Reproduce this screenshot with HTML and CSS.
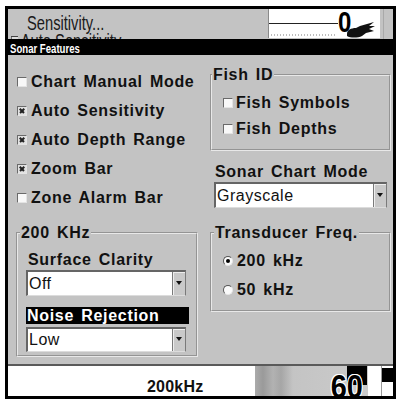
FILE: index.html
```html
<!DOCTYPE html>
<html lang="en">
<head>
<meta charset="utf-8">
<title>Sonar Features</title>
<link rel="stylesheet" href="styles.css">
</head>
<body>
<div class="screen">
  <div class="top">
    <div class="top-left">
      <div class="sens">Sensitivity...</div>
      <div class="sens sens-auto"><span class="mini-cb"></span>Auto Sensitivity</div>
    </div>
    <div class="depth-box">
      <span class="scale-line"></span>
      <span class="zero">0</span>
      <svg class="fish" viewBox="0 0 28 16" width="28" height="16" aria-hidden="true">
        <path d="M0 12 C0 8 4 6 9 6 L13 4 L27 0 L22 4 L28 4 L22 7 L27 9 L19 11 L15 14 C11 16 3 16 0 14 Z" fill="#111"/>
      </svg>
    </div>
    <div class="top-gutter"></div>
  </div>

  <div class="titlebar"><span class="titlebar-text">Sonar Features</span></div>

  <div class="dialog">
    <div class="col col-left">
      <div class="check"><span class="cb"></span>Chart Manual Mode</div>
      <div class="check"><span class="cb on"></span>Auto Sensitivity</div>
      <div class="check"><span class="cb on"></span>Auto Depth Range</div>
      <div class="check"><span class="cb on"></span>Zoom Bar</div>
      <div class="check"><span class="cb"></span>Zone Alarm Bar</div>

      <div class="group group-200">
        <div class="group-title">200 KHz</div>
        <div class="field-label clarity">Surface Clarity</div>
        <div class="select select-off"><span class="select-value">Off</span><span class="select-btn"></span></div>
        <div class="field-label focused">Noise Rejection</div>
        <div class="select select-low"><span class="select-value">Low</span><span class="select-btn"></span></div>
      </div>
    </div>

    <div class="col col-right">
      <div class="group group-fish">
        <div class="group-title">Fish ID</div>
        <div class="check check-sub first"><span class="cb"></span>Fish Symbols</div>
        <div class="check check-sub"><span class="cb"></span>Fish Depths</div>
      </div>

      <div class="field-label chart-mode">Sonar Chart Mode</div>
      <div class="select select-wide"><span class="select-value">Grayscale</span><span class="select-btn"></span></div>

      <div class="group group-freq">
        <div class="group-title">Transducer Freq.</div>
        <div class="radio-row first"><span class="radio on"></span>200 kHz</div>
        <div class="radio-row"><span class="radio"></span>50 kHz</div>
      </div>
    </div>
  </div>

  <div class="status">
    <div class="status-freq">200kHz</div>
    <div class="status-depth"><span class="depth-num">60</span></div>
    <div class="status-gap"></div>
    <div class="status-scale"><span class="scale-mark"></span></div>
  </div>
</div>
</body>
</html>
```

FILE: styles.css
```css
html, body {
  margin: 0;
  padding: 0;
  background: #fff;
}

body {
  font-family: "Liberation Sans", Arial, sans-serif;
  color: #111;
}

.screen {
  width: 391px;
  height: 393px;
  margin: 6px 0 0 5px;
  border: 3px solid #000;
  box-sizing: border-box;
  background: #c3c3c3;
  display: flex;
  flex-direction: column;
  overflow: hidden;
}

/* ---------- top strip (underlying menu) ---------- */
.top {
  height: 30px;
  flex: none;
  display: flex;
  overflow: hidden;
}

.top-left {
  width: 260px;
  flex: none;
  overflow: hidden;
}

.sens {
  font-size: 21px;
  line-height: 20px;
  margin: 4px 0 0 19px;
  white-space: nowrap;
  color: #1a1a1a;
  transform: scaleX(0.7);
  transform-origin: 0 0;
}

.sens-auto {
  margin: -2px 0 0 3px;
  display: flex;
  align-items: center;
}

.mini-cb {
  width: 9px;
  height: 9px;
  border-top: 1px solid #444;
  border-left: 1px solid #444;
  background: #ddd;
  margin: 0 4px 0 0;
  flex: none;
}

.depth-box {
  width: 112px;
  height: 29px;
  flex: none;
  border-left: 1px solid #8a8a8a;
  box-sizing: border-box;
  display: flex;
  align-items: flex-start;
  background:
    repeating-linear-gradient(90deg, #bdbdbd 0 1px, transparent 1px 3px) no-repeat 2px 25px / 66px 2px,
    #fff;
}

.scale-line {
  width: 69px;
  height: 1px;
  margin-top: 14px;
  background: #222;
  flex: none;
}

.zero {
  display: inline-block;
  font-weight: bold;
  font-size: 30px;
  line-height: 25px;
  color: #000;
  transform: scaleX(0.8);
  transform-origin: 0 0;
}

.fish {
  flex: none;
  margin: 13px 0 0 -8px;
}

.top-gutter {
  flex: 1;
  margin-left: 3px;
  border-left: 1px solid #a9a9a9;
}

/* ---------- title bar ---------- */
.titlebar {
  height: 16px;
  flex: none;
  background: #000;
  padding-left: 2px;
}

.titlebar-text {
  display: inline-block;
  color: #fff;
  font-weight: bold;
  font-size: 12px;
  line-height: 16px;
  white-space: nowrap;
  transform: scaleX(0.8);
  transform-origin: 0 0;
}

/* ---------- dialog ---------- */
.dialog {
  height: 309px;
  flex: none;
  display: flex;
  border-bottom: 2px solid #5a5a5a;
}

.col-left {
  width: 197px;
  flex: none;
  padding: 12px 0 0 9px;
  box-sizing: border-box;
}

.col-right {
  flex: 1;
}

.check,
.radio-row,
.field-label,
.group-title {
  font-weight: bold;
  font-size: 16px;
  letter-spacing: 0.7px;
  word-spacing: 2px;
  white-space: nowrap;
  color: #111;
}

.check {
  height: 29px;
  display: flex;
  align-items: center;
}

.cb {
  width: 10px;
  height: 10px;
  box-sizing: border-box;
  border: 1px solid;
  border-color: #6a6a6a #e4e4e4 #e4e4e4 #6a6a6a;
  background: #f8f8f8;
  margin-right: 4px;
  flex: none;
  position: relative;
}

.cb.on {
  background: #e2e2e2;
}

.cb.on::before,
.cb.on::after {
  content: "";
  position: absolute;
  left: 1px;
  top: 3px;
  width: 6px;
  height: 1.6px;
  background: #222;
  transform: rotate(45deg);
}

.cb.on::after {
  transform: rotate(-45deg);
}

/* group boxes */
.group {
  border: 2px groove #e8e8e8;
  box-sizing: border-box;
}

.group-title {
  display: table;
  line-height: 18px;
  margin-top: -10px;
  padding: 0 1px;
  background: #c3c3c3;
}

.group-200 {
  width: 182px;
  margin: 20px 0 0 -1px;
  padding-bottom: 3px;
}

.group-200 .group-title {
  margin-left: 2px;
}

.clarity {
  line-height: 18px;
  margin: 9px 0 0 10px;
}

.field-label.focused {
  width: 163px;
  height: 17px;
  line-height: 17px;
  margin: 11px 0 0 8px;
  padding-left: 1px;
  box-sizing: border-box;
  background: #000;
  color: #fff;
}

.group-fish {
  width: 181px;
  margin: 19px 0 0 5px;
  padding-bottom: 7px;
}

.check-sub {
  height: 26px;
  margin-left: 11px;
}

.check-sub .cb {
  margin-right: 3px;
}

.check-sub.first {
  margin-top: 6px;
}

.chart-mode {
  line-height: 18px;
  margin: 12px 0 0 10px;
}

.group-freq {
  width: 181px;
  margin: 24px 0 0 5px;
  padding-bottom: 6px;
}

.group-freq .group-title {
  margin-left: 2px;
}

.radio-row {
  height: 29px;
  margin-left: 11px;
  display: flex;
  align-items: center;
}

.radio-row.first {
  margin-top: 4px;
}

.radio {
  width: 10px;
  height: 10px;
  box-sizing: border-box;
  border-radius: 50%;
  border: 1px solid;
  border-color: #555 #e6e6e6 #e6e6e6 #555;
  background: #fafafa;
  margin-right: 4px;
  flex: none;
  position: relative;
}

.radio.on::after {
  content: "";
  position: absolute;
  left: 2px;
  top: 2px;
  width: 4px;
  height: 4px;
  border-radius: 50%;
  background: #000;
}

/* dropdowns */
.select {
  display: flex;
  background: #fff;
  box-sizing: border-box;
  border-style: solid;
  border-width: 2px 1px 1px 2px;
  border-color: #656565 #7a7a7a #dcdcdc #656565;
}

.select-value {
  flex: 1;
  display: flex;
  align-items: center;
  padding-left: 1px;
  font-size: 16px;
  letter-spacing: 0.5px;
  color: #111;
}

.select-btn {
  width: 12px;
  flex: none;
  background: #c9c9c9;
  border-left: 1px solid #7a7a7a;
  box-shadow: inset 1px 1px 0 #eee;
  display: flex;
  align-items: center;
  justify-content: center;
}

.select-btn::after {
  content: "";
  border-left: 3px solid transparent;
  border-right: 3px solid transparent;
  border-top: 4px solid #111;
  margin-top: -2px;
}

.select-off {
  width: 160px;
  height: 26px;
  margin: 1px 0 0 8px;
}

.select-low {
  width: 160px;
  height: 25px;
  margin: 3px 0 0 8px;
}

.select-wide {
  width: 173px;
  height: 26px;
  margin: 1px 0 0 9px;
}

/* ---------- status strip ---------- */
.status {
  height: 30px;
  flex: none;
  display: flex;
  background: #fff;
}

.status-freq {
  width: 247px;
  flex: none;
  box-sizing: border-box;
  padding: 12px 0 0 139px;
  font-weight: bold;
  font-size: 16px;
  line-height: 18px;
  letter-spacing: 0.2px;
  color: #111;
}

.status-depth {
  width: 113px;
  flex: none;
  position: relative;
  overflow: hidden;
  display: flex;
  justify-content: flex-end;
  padding-right: 5px;
  box-sizing: border-box;
  background: linear-gradient(90deg, #ababab 0, #9a9a9a 8px, #b2b2b2 18px, #a6a6a6 26px, #c4c4c4 38px, #cbcbcb 100%);
}

.status-depth::before {
  content: "";
  position: absolute;
  left: 92px;
  top: 0;
  width: 20px;
  height: 19px;
  background: #000;
}

.depth-num {
  position: relative;
  display: inline-block;
  font-weight: bold;
  font-size: 34px;
  line-height: 30px;
  margin-top: 5px;
  color: #000;
  transform: scaleX(0.85);
  transform-origin: 100% 0;
  text-shadow: 1px 0 #fff, -1px 0 #fff, 0 1px #fff, 0 -1px #fff,
    1px 1px #fff, -1px -1px #fff, 1px -1px #fff, -1px 1px #fff;
}

.status-gap {
  width: 13px;
  flex: none;
  background: #fff;
}

.status-scale {
  flex: 1;
  border-left: 1px solid #9a9a9a;
  background: #fff;
  display: flex;
  flex-direction: column;
}

.scale-mark {
  height: 14px;
  margin-top: 2px;
  background: #000;
}
```
